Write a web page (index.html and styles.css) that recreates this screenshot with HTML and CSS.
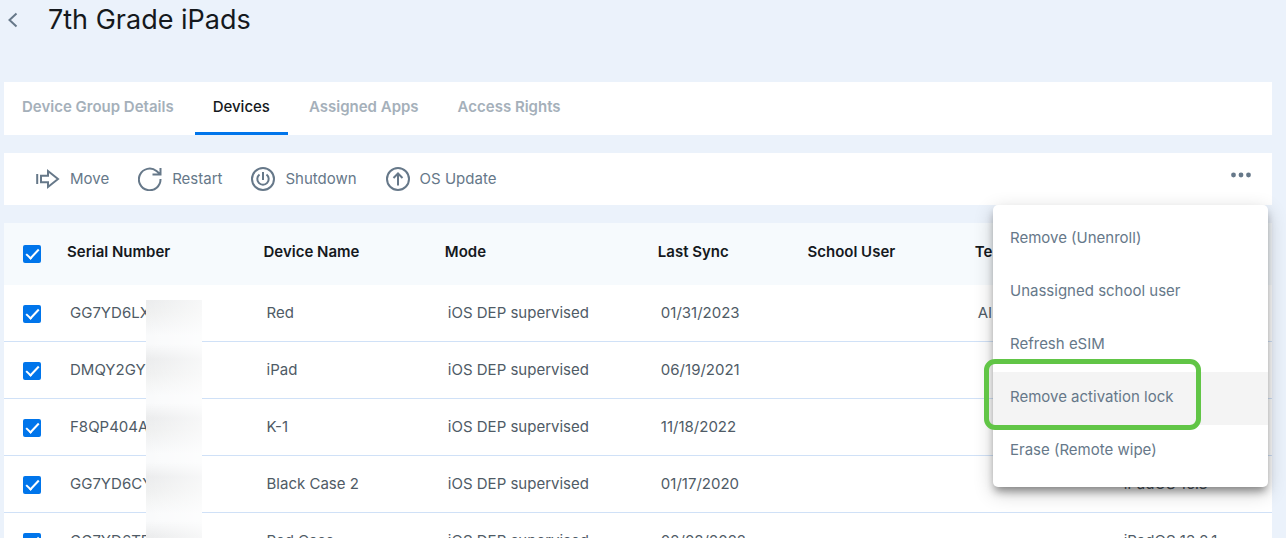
FILE: index.html
```html
<!DOCTYPE html>
<html lang="en">
<head>
<meta charset="utf-8">
<title>7th Grade iPads</title>
<link rel="stylesheet" href="styles.css">
</head>
<body>
<header class="page-head">
  <button class="back" type="button" aria-label="Back">
    <svg width="12" height="16" viewBox="0 0 12 16"><path d="M8.500 1.500 1.500 8l7 6.500"/></svg>
  </button>
  <h1 class="title">7th Grade iPads</h1>
</header>
<main class="content">
  <nav class="tabs">
    <a class="tab" href="#details">Device Group Details</a>
    <a class="tab tab-active" href="#devices">Devices</a>
    <a class="tab" href="#apps">Assigned Apps</a>
    <a class="tab" href="#rights">Access Rights</a>
  </nav>

  <section class="toolbar">
    <button class="action" type="button">
      <svg class="icon" viewBox="0 0 24 24"><path d="M1.200 7v10M5 8.800h7V4l10 8-10 8v-4.800H5z"/></svg>Move
    </button>
    <button class="action" type="button">
      <svg class="icon" viewBox="0 0 24 24"><path d="M22.500 12A10.800 10.800 0 1 1 18.500 4L22 7M22.500 1v6.500h-8"/></svg>Restart
    </button>
    <button class="action" type="button">
      <svg class="icon" viewBox="0 0 24 24"><circle cx="12" cy="12" r="11"/><path d="M12 5v8M8.500 7.500a5.700 5.700 0 1 0 7 0"/></svg>Shutdown
    </button>
    <button class="action" type="button">
      <svg class="icon" viewBox="0 0 24 24"><circle cx="12" cy="12" r="11"/><path d="M12 18.500V6.500M7.500 11 12 6.500l4.500 4.500"/></svg>OS Update
    </button>
    <button class="more" type="button" aria-label="More actions">
      <svg width="22" height="6" viewBox="0 0 22 6"><circle cx="3.500" cy="3" r="2.400"/><circle cx="11" cy="3" r="2.400"/><circle cx="18.500" cy="3" r="2.400"/></svg>
    </button>
    <div class="menu">
      <button class="menu-item" type="button">Remove (Unenroll)</button>
      <button class="menu-item" type="button">Unassigned school user</button>
      <button class="menu-item" type="button">Refresh eSIM</button>
      <button class="menu-item menu-item-current" type="button">Remove activation lock</button>
      <button class="menu-item" type="button">Erase (Remote wipe)</button>
    </div>
  </section>

  <section class="devices">
    <table class="grid">
      <colgroup><col class="c-check"><col class="c-serial"><col class="c-name"><col class="c-mode"><col class="c-sync"><col class="c-user"><col class="c-te"><col></colgroup>
      <thead>
        <tr><th><input class="check" type="checkbox" aria-label="Select all" checked></th><th>Serial Number</th><th>Device Name</th><th>Mode</th><th>Last Sync</th><th>School User</th><th>Te</th><th></th></tr>
      </thead>
      <tbody>
        <tr><td><input class="check" type="checkbox" aria-label="Select Red" checked></td><td>GG7YD6LX</td><td>Red</td><td>iOS DEP supervised</td><td>01/31/2023</td><td></td><td>Al</td><td></td></tr>
        <tr><td><input class="check" type="checkbox" aria-label="Select iPad" checked></td><td>DMQY2GY</td><td>iPad</td><td>iOS DEP supervised</td><td>06/19/2021</td><td></td><td></td><td></td></tr>
        <tr><td><input class="check" type="checkbox" aria-label="Select K-1" checked></td><td>F8QP404A</td><td>K-1</td><td>iOS DEP supervised</td><td>11/18/2022</td><td></td><td></td><td></td></tr>
        <tr><td><input class="check" type="checkbox" aria-label="Select Black Case 2" checked></td><td>GG7YD6CY</td><td>Black Case 2</td><td>iOS DEP supervised</td><td>01/17/2020</td><td></td><td></td><td>iPadOS 16.3</td></tr>
        <tr><td><input class="check" type="checkbox" aria-label="Select Red Case" checked></td><td>GG7YD6TF</td><td>Red Case</td><td>iOS DEP supervised</td><td>02/08/2022</td><td></td><td></td><td>iPadOS 13.2.1</td></tr>
      </tbody>
    </table>
    <div class="redaction"></div>
  </section>
</main>
</body>
</html>
```
FILE: styles.css
```css
*, ::before, ::after { box-sizing: border-box; }

body {
  margin: 0;
  height: 100vh;
  overflow: hidden;
  background: #ebf2fb;
  color: #4f5b66;
  font: 15px/20px Inter, "Open Sans", sans-serif;
}

button {
  padding: 0;
  border: 0;
  background: none;
  color: #667889;
  font: inherit;
  cursor: pointer;
}

svg { fill: none; stroke: #667889; stroke-width: 2; }

.page-head {
  display: flex;
  align-items: center;
  gap: 28px;
  height: 40px;
  padding-left: 8px;
}

.back, .back svg { display: block; }
.back { width: 12px; }

.title {
  margin: 0;
  color: #15191d;
  font-size: 27px;
  font-weight: 400;
  line-height: 40px;
}

.content {
  display: flex;
  flex-direction: column;
  gap: 18px;
  padding: 42px 14px 0 4px;
}

.tabs { display: flex; gap: 3px; height: 53px; background: #fff; }

.tab {
  padding: 15px 18px;
  border-bottom: 3px solid transparent;
  color: #a5b0ba;
  font-weight: 600;
  text-decoration: none;
}

.tab-active { border-color: #0075eb; color: #15191d; font-weight: 500; }

.toolbar {
  position: relative;
  display: flex;
  align-items: center;
  gap: 29px;
  height: 52px;
  padding: 0 20px 0 32px;
  background: #fff;
}

.action { display: flex; align-items: center; gap: 10px; }
.icon { width: 24px; height: 24px; }

.more { height: 20px; margin-left: auto; padding-bottom: 8px; }
.more svg { display: block; fill: #667889; stroke: none; }

.menu {
  position: absolute;
  z-index: 2;
  top: 100%;
  right: 4px;
  width: 275px;
  padding: 8px 0 9px;
  border-radius: 5px;
  background: #fff;
  box-shadow: 0 6px 8px -2px rgba(0, 0, 0, .4), 0 6px 20px rgba(0, 0, 0, .2);
}

.menu-item {
  position: relative;
  display: block;
  width: 100%;
  height: 53px;
  padding: 0 17px 3px;
  text-align: left;
}

.menu-item-current { background: #f4f4f4; }

.menu-item-current::after {
  content: "";
  position: absolute;
  top: -13px;
  left: -9px;
  width: 217px;
  height: 71px;
  border: 5px solid #61c546;
  border-radius: 11px;
}

.devices { position: relative; }

.grid {
  width: 100%;
  border-collapse: separate;
  border-spacing: 0;
  table-layout: fixed;
  background: #fff;
}

.c-check { width: 63px; }
.c-serial { width: 15.500%; }
.c-name { width: 14.300%; }
.c-mode { width: 16.800%; }
.c-sync { width: 11.800%; }
.c-user { width: 13.200%; }
.c-te { width: 11.500%; }

.grid th {
  height: 62px;
  padding: 0 0 5px;
  background: #f6fafd;
  color: #15191d;
  font-weight: 600;
  text-align: left;
  white-space: nowrap;
}

.grid td {
  height: 57px;
  padding: 0 0 1px 3px;
  border-bottom: 1px solid #d0e1f7;
  white-space: nowrap;
}

.grid th:first-child { padding: 0 0 1px 19px; }
.grid td:first-child { padding: 1px 0 0 19px; }

.check {
  display: block;
  width: 18px;
  height: 18px;
  margin: 0;
  border-radius: 2px;
  appearance: none;
  background: #0075eb;
}

.check::after {
  content: "";
  display: block;
  width: 7px;
  height: 13px;
  margin: 1px 0 0 6px;
  border: solid #fff;
  border-width: 0 2px 2px 0;
  transform: rotate(43deg);
}

.redaction {
  position: absolute;
  top: 77px;
  bottom: 0;
  left: 142px;
  width: 56px;
  background:
    linear-gradient(90deg, transparent, rgba(255, 255, 255, .6)),
    repeating-linear-gradient(#ebeced 0, #eff0f0 14px, #f9fafb 36px, #f9fafb 44px, #ebeced 59px);
}
```
